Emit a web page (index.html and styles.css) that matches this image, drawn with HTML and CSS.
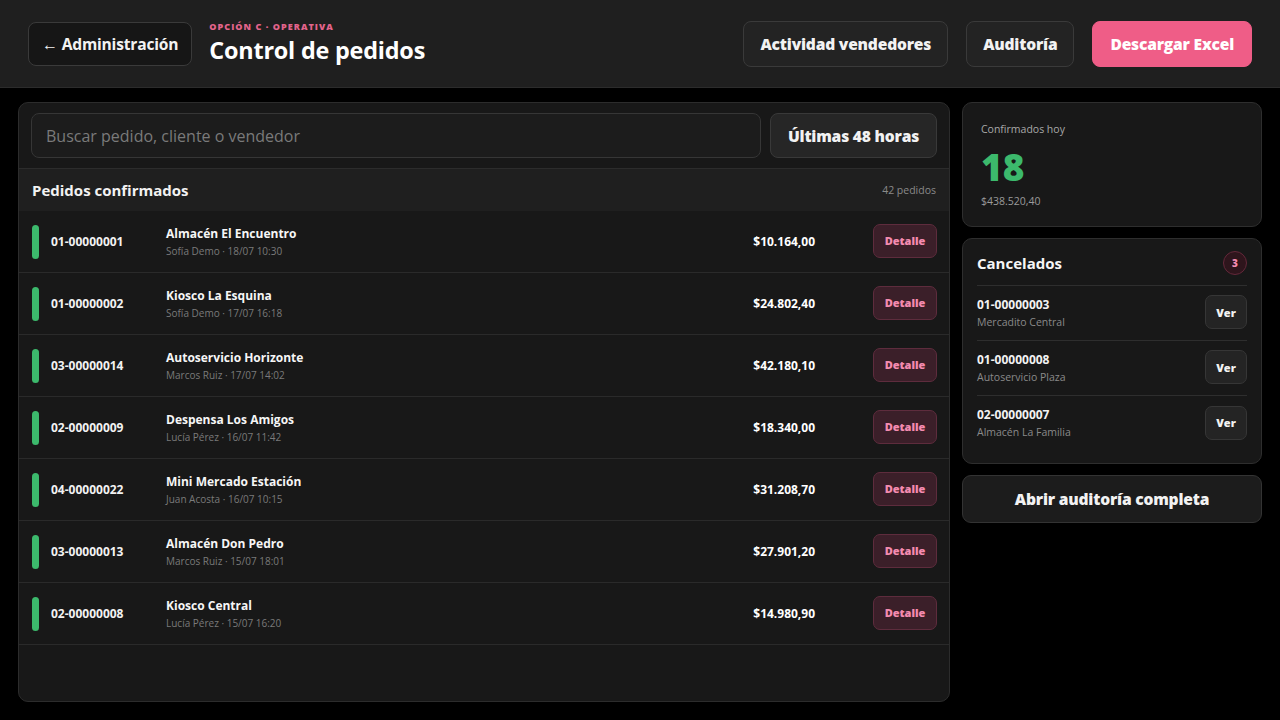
FILE: index.html
```html
<!DOCTYPE html>
<html lang="es">
<head>
<meta charset="utf-8">
<title>Control de pedidos</title>
<link rel="stylesheet" href="styles.css">
</head>
<body>
<header class="topbar">
  <div class="top-left">
    <button class="btn btn-back"><span class="arrow">←</span> Administración</button>
    <div class="titles">
      <div class="eyebrow">OPCIÓN C · OPERATIVA</div>
      <h1 class="title">Control de pedidos</h1>
    </div>
  </div>
  <div class="top-actions">
    <button class="btn btn-dark">Actividad vendedores</button>
    <button class="btn btn-dark">Auditoría</button>
    <button class="btn btn-pink">Descargar Excel</button>
  </div>
</header>
<main class="main">
  <section class="panel">
    <div class="search-row">
      <div class="search">Buscar pedido, cliente o vendedor</div>
      <button class="btn btn-filter">Últimas 48 horas</button>
    </div>
    <div class="list-head">
      <span class="list-title">Pedidos confirmados</span>
      <span class="list-count">42 pedidos</span>
    </div>
    <div class="rows">
      <div class="row"><span class="bar"></span><span class="oid">01-00000001</span><div class="client"><div class="cname">Almacén El Encuentro</div><div class="csub">Sofía Demo · 18/07 10:30</div></div><span class="amount">$10.164,00</span><button class="btn-detail">Detalle</button></div>
      <div class="row"><span class="bar"></span><span class="oid">01-00000002</span><div class="client"><div class="cname">Kiosco La Esquina</div><div class="csub">Sofía Demo · 17/07 16:18</div></div><span class="amount">$24.802,40</span><button class="btn-detail">Detalle</button></div>
      <div class="row"><span class="bar"></span><span class="oid">03-00000014</span><div class="client"><div class="cname">Autoservicio Horizonte</div><div class="csub">Marcos Ruiz · 17/07 14:02</div></div><span class="amount">$42.180,10</span><button class="btn-detail">Detalle</button></div>
      <div class="row"><span class="bar"></span><span class="oid">02-00000009</span><div class="client"><div class="cname">Despensa Los Amigos</div><div class="csub">Lucía Pérez · 16/07 11:42</div></div><span class="amount">$18.340,00</span><button class="btn-detail">Detalle</button></div>
      <div class="row"><span class="bar"></span><span class="oid">04-00000022</span><div class="client"><div class="cname">Mini Mercado Estación</div><div class="csub">Juan Acosta · 16/07 10:15</div></div><span class="amount">$31.208,70</span><button class="btn-detail">Detalle</button></div>
      <div class="row"><span class="bar"></span><span class="oid">03-00000013</span><div class="client"><div class="cname">Almacén Don Pedro</div><div class="csub">Marcos Ruiz · 15/07 18:01</div></div><span class="amount">$27.901,20</span><button class="btn-detail">Detalle</button></div>
      <div class="row"><span class="bar"></span><span class="oid">02-00000008</span><div class="client"><div class="cname">Kiosco Central</div><div class="csub">Lucía Pérez · 15/07 16:20</div></div><span class="amount">$14.980,90</span><button class="btn-detail">Detalle</button></div>
    </div>
  </section>
  <aside class="side">
    <div class="card stat">
      <div class="stat-label">Confirmados hoy</div>
      <div class="stat-value">18</div>
      <div class="stat-sub">$438.520,40</div>
    </div>
    <div class="card cancel">
      <div class="cancel-head">
        <span class="cancel-title">Cancelados</span>
        <span class="badge">3</span>
      </div>
      <div class="cancel-item"><div><div class="ci-id">01-00000003</div><div class="ci-sub">Mercadito Central</div></div><button class="btn-ver">Ver</button></div>
      <div class="cancel-item"><div><div class="ci-id">01-00000008</div><div class="ci-sub">Autoservicio Plaza</div></div><button class="btn-ver">Ver</button></div>
      <div class="cancel-item"><div><div class="ci-id">02-00000007</div><div class="ci-sub">Almacén La Familia</div></div><button class="btn-ver">Ver</button></div>
    </div>
    <button class="btn btn-audit">Abrir auditoría completa</button>
  </aside>
</main>
</body>
</html>
```

FILE: styles.css
```css
* { box-sizing: border-box; }
html, body { margin: 0; padding: 0; }
body {
  background: #000;
  color: #f2f2f2;
  font-family: "Open Sans", "Noto Sans", "Liberation Sans", sans-serif;
  width: 1280px;
  height: 720px;
  overflow: hidden;
}
button { font-family: inherit; cursor: pointer; }

.topbar {
  height: 88px;
  background: #1f1f1f;
  border-bottom: 1px solid #2c2c2c;
  display: flex;
  align-items: center;
  justify-content: space-between;
  padding: 0 28px 0 28px;
}
.top-left { display: flex; align-items: center; gap: 17px; }
.titles { display: flex; flex-direction: column; margin-top: -2px; }
.eyebrow {
  font-size: 9px;
  font-weight: 800;
  letter-spacing: 1.05px;
  color: #e4648c;
  line-height: 12px;
}
.title {
  margin: 2px 0 0;
  font-size: 23.4px;
  font-weight: 700;
  color: #fff;
  line-height: 30px;
  letter-spacing: -0.2px;
}
.top-actions { display: flex; gap: 18px; align-items: center; }

.btn {
  border-radius: 8px;
  font-weight: 800;
  font-size: 15.6px;
  color: #f2f2f2;
  letter-spacing: -0.2px;
}
.btn-back {
  height: 44px;
  padding: 0 13px;
  background: #161616;
  border: 1px solid #3a3a3a;
  font-weight: 700;
  font-size: 15.6px;
}
.arrow { font-size: 16px; font-weight: 400; }
.btn-dark {
  height: 46px;
  padding: 0 16px;
  background: #232323;
  border: 1px solid #3a3a3a;
}
.btn-pink {
  height: 46px;
  padding: 0 17px;
  background: #ef5d87;
  border: 1px solid #ef5d87;
  color: #fff;
}

.main {
  display: flex;
  gap: 12px;
  padding: 14px 18px 18px 18px;
  height: 632px;
}
.panel {
  width: 932px;
  height: 600px;
  background: #181818;
  border: 1px solid #2c2c2c;
  border-radius: 10px;
  display: flex;
  flex-direction: column;
  overflow: hidden;
}
.search-row {
  display: flex;
  gap: 9px;
  padding: 10px 12px 10px 12px;
  border-bottom: 1px solid #2c2c2c;
}
.search {
  flex: 1;
  height: 45px;
  border: 1px solid #363636;
  background: #1c1c1c;
  border-radius: 8px;
  color: #7a7a7a;
  font-size: 16px;
  display: flex;
  align-items: center;
  padding: 0 14px;
}
.btn-filter {
  width: 167px;
  height: 45px;
  background: #262626;
  border: 1px solid #393939;
}
.list-head {
  height: 42px;
  background: #1f1f1f;
  display: flex;
  align-items: center;
  justify-content: space-between;
  padding: 0 13px;
}
.list-title { font-size: 15px; font-weight: 700; color: #f2f2f2; }
.list-count { font-size: 10.5px; color: #8a8a8a; }

.row {
  height: 62px;
  display: flex;
  align-items: center;
  padding: 0 12px 0 13px;
  border-bottom: 1px solid #2a2a2a;
}
.bar {
  width: 7px;
  height: 34px;
  border-radius: 4px;
  background: #3cb96c;
  flex: none;
}
.oid {
  width: 115px;
  margin-left: 12px;
  font-size: 12px;
  font-weight: 700;
  color: #f2f2f2;
}
.client { flex: 1; display: flex; flex-direction: column; gap: 2px; margin-top: -1px; }
.cname { font-size: 12px; font-weight: 700; color: #f6f6f6; }
.csub { font-size: 10px; color: #7a7a7a; }
.amount {
  font-size: 12px;
  font-weight: 700;
  color: #fff;
  margin-right: 58px;
}
.btn-detail {
  width: 64px;
  height: 34px;
  border-radius: 7px;
  background: #3b1f29;
  border: 1px solid #5e2c3d;
  color: #f48bb0;
  font-size: 11px;
  font-weight: 800;
  margin-top: -2px;
}

.side {
  width: 300px;
  display: flex;
  flex-direction: column;
  gap: 11px;
}
.card {
  background: #181818;
  border: 1px solid #2e2e2e;
  border-radius: 10px;
}
.stat { height: 125px; padding: 19px 18px; }
.stat-label { font-size: 10.5px; color: #a8a8a8; }
.stat-value {
  font-size: 37px;
  font-weight: 800;
  color: #3cb96c;
  line-height: 50px;
  margin-top: 6px;
}
.stat-sub { font-size: 10.5px; color: #9a9a9a; margin-top: 2px; }

.cancel { padding: 12px 14px 12px 14px; height: 226px; }
.cancel-head {
  display: flex;
  align-items: center;
  justify-content: space-between;
  padding-bottom: 10px;
  border-bottom: 1px solid #2e2e2e;
}
.cancel-title { font-size: 15px; font-weight: 700; color: #f6f6f6; }
.badge {
  width: 24px;
  height: 24px;
  border-radius: 50%;
  background: #2e151c;
  border: 1px solid #63283a;
  color: #f48bb0;
  font-size: 10px;
  font-weight: 800;
  display: flex;
  align-items: center;
  justify-content: center;
}
.cancel-item {
  height: 55px;
  display: flex;
  align-items: center;
  justify-content: space-between;
  border-bottom: 1px solid #2e2e2e;
}
.cancel-item:last-child { border-bottom: none; }
.ci-id { font-size: 12px; font-weight: 700; color: #f2f2f2; margin-top: -2px; }
.ci-sub { font-size: 10.5px; color: #8a8a8a; margin-top: 2px; }
.btn-ver {
  width: 42px;
  height: 34px;
  border-radius: 7px;
  background: #242424;
  border: 1px solid #363636;
  color: #f2f2f2;
  font-size: 11px;
  font-weight: 800;
  margin-top: -2px;
}
.btn-audit {
  height: 48px;
  width: 100%;
  background: #1c1c1c;
  border: 1px solid #333;
  border-radius: 9px;
}
```
